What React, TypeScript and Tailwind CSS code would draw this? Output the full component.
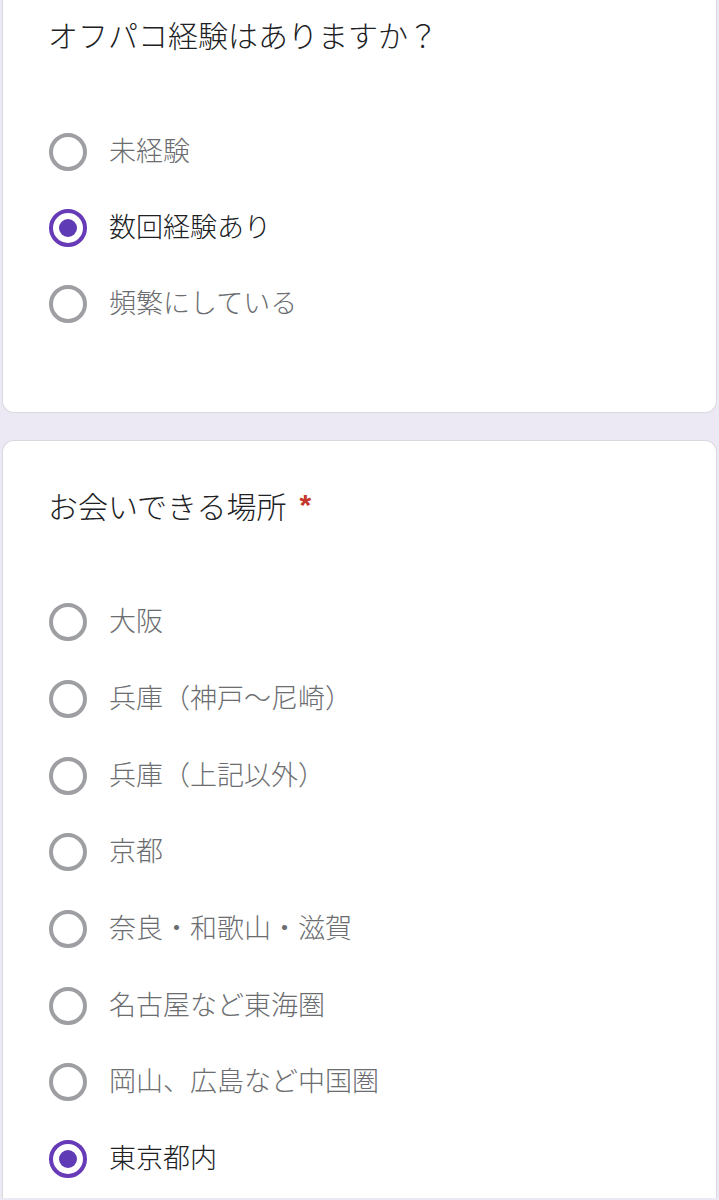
const font = { fontFamily: '"Noto Sans CJK JP", "Noto Sans", sans-serif' };

function Radio({ checked }: { checked?: boolean }) {
  return (
    <span
      className={
        "flex size-[38px] shrink-0 items-center justify-center rounded-full border-[4px] " +
        (checked ? "border-[#673ab7]" : "border-[#9e9fa3]")
      }
    >
      {checked && <span className="size-[18px] rounded-full bg-[#5f3bb5]" />}
    </span>
  );
}

function Option({ label, checked, rowClass }: { label: string; checked?: boolean; rowClass: string }) {
  return (
    <div className={"flex items-center gap-[22px] " + rowClass}>
      <Radio checked={checked} />
      <span
        className={
          "pb-[5px] text-[27px] font-light leading-none whitespace-nowrap " +
          (checked ? "text-[#202124]" : "text-[#6b6d70]")
        }
      >
        {label}
      </span>
    </div>
  );
}

const places = [
  { label: "大阪" },
  { label: "兵庫（神戸〜尼崎）" },
  { label: "兵庫（上記以外）" },
  { label: "京都" },
  { label: "奈良・和歌山・滋賀" },
  { label: "名古屋など東海圏" },
  { label: "岡山、広島など中国圏" },
  { label: "東京都内", checked: true },
];

export default function App() {
  return (
    <div className="h-[1200px] overflow-hidden bg-[#ece8f4]" style={font}>
      {/* experience card, top cut off by the screenshot */}
      <section className="mx-[2px] rounded-b-[12px] border-x border-b border-[#d9d8de] bg-white pl-[45px] pt-[15px] pb-[70px]">
        <h2 className="text-[30px] font-light leading-[39px] text-[#202124]">オフパコ経験はありますか？</h2>
        <div className="mt-[60px] flex flex-col pl-px">
          <Option label="未経験" rowClass="h-[76px]" />
          <Option label="数回経験あり" checked rowClass="h-[76px]" />
          <Option label="頻繁にしている" rowClass="h-[76px]" />
        </div>
      </section>

      <section className="mx-[2px] mt-[27px] rounded-t-[12px] border-x border-t border-[#d9d8de] bg-white pl-[45px] pt-[45px]">
        <h2 className="flex items-start text-[30px] font-light leading-[39px] text-[#202124]">
          お会いできる場所
          <span
            className="ml-[13px] text-[30px] font-bold leading-[38px] text-[#c5372c]"
            style={{ fontFamily: '"Liberation Sans", sans-serif' }}
          >
            *
          </span>
        </h2>
        <div className="mt-[59px] flex flex-col pl-px">
          {places.map((p) => (
            <Option key={p.label} label={p.label} checked={p.checked} rowClass="h-[76.7px]" />
          ))}
        </div>
      </section>
    </div>
  );
}
